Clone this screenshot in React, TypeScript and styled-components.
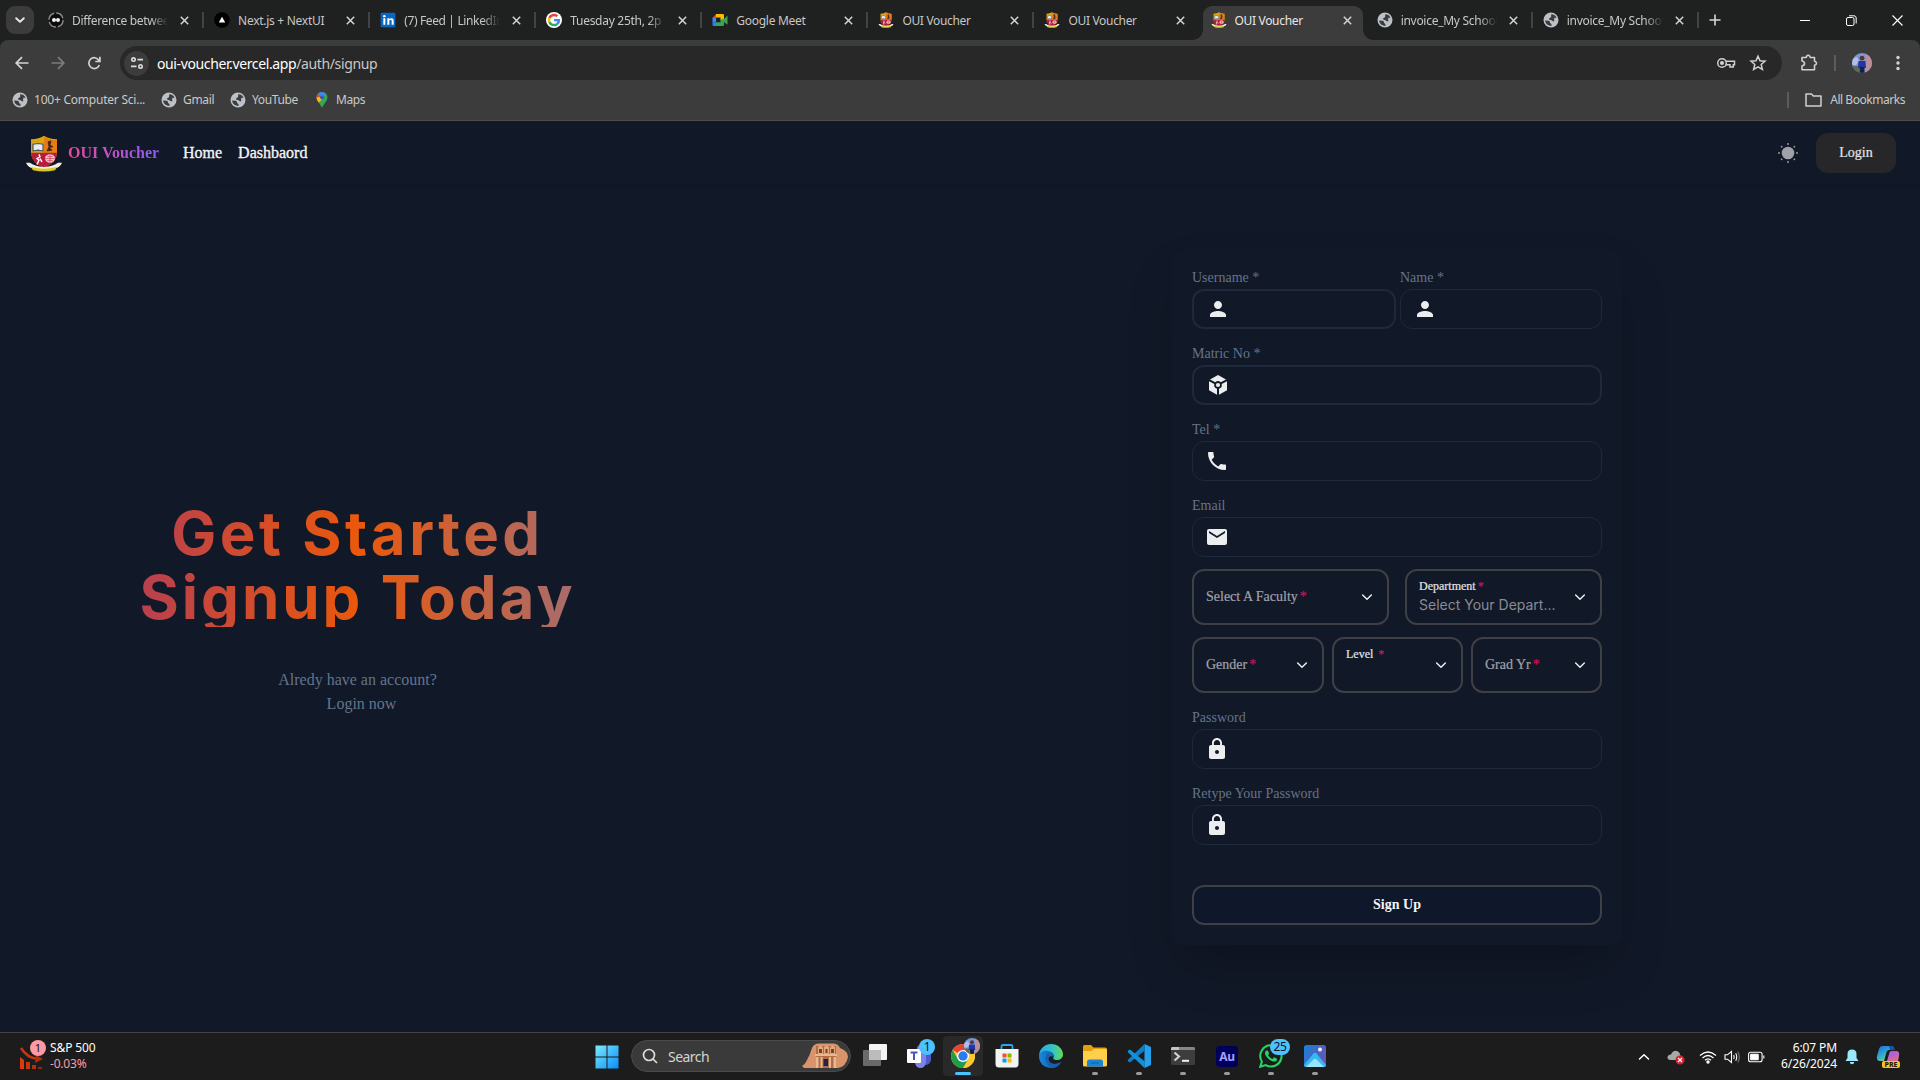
import React from 'react';
import styled, { createGlobalStyle } from 'styled-components';
import { MdPerson, MdPhone, MdEmail, MdLock } from 'react-icons/md';

const UI = `"Noto Sans", "Open Sans", sans-serif`;
const SERIF = `"Liberation Serif", "Times New Roman", serif`;

const Global = createGlobalStyle`
  * { box-sizing: border-box; }
  html, body { margin: 0; padding: 0; background: #111827; overflow: hidden; }
  svg { display: block; flex: none; }
  button { border: 0; padding: 0; margin: 0; background: none; color: inherit; font: inherit; }
`;

const Screen = styled.div`
  width: 1920px;
  height: 1080px;
  display: flex;
  flex-direction: column;
  overflow: hidden;
  font-family: ${UI};
  background: #111827;
`;

/* ---------- Browser ---------- */
const TabStrip = styled.div`
  height: 40px;
  display: flex;
  background: #1f2020;
  color: #c7c7c7;
  flex: none;
`;
const TabSearch = styled.button`
  width: 28px;
  height: 28px;
  margin: 6px 6px 0;
  border-radius: 9px;
  background: #3c3c3c;
  display: grid;
  place-items: center;
`;
const Tab = styled.div<{ $active?: boolean; $line?: boolean }>`
  position: relative;
  width: 160px;
  height: 34px;
  margin: 6px 6.08px 0 0;
  padding: 0 11px 6px 8px;
  display: flex;
  align-items: center;
  border-radius: 9px 9px 0 0;
  background: ${p => (p.$active ? '#3c3c3c' : 'transparent')};
  color: ${p => (p.$active ? '#e8e8e8' : '#c7c7c7')};
  &::after {
    content: '';
    position: absolute;
    display: ${p => (p.$line ? 'block' : 'none')};
    right: -4px;
    top: 6px;
    width: 2px;
    height: 16px;
    background: #424444;
  }
`;
const TabFoot = styled.i<{ $side: 'left' | 'right' }>`
  position: absolute;
  bottom: 0;
  ${p => p.$side}: -10px;
  width: 10px;
  height: 10px;
  background: radial-gradient(circle at ${p => (p.$side === 'left' ? '0 0' : '100% 0')}, transparent 9.5px, #3c3c3c 10px);
`;
const TabTitle = styled.span<{ $fade?: boolean; $ls: number }>`
  width: 98px;
  margin-left: 8px;
  padding-top: 1px;
  overflow: hidden;
  white-space: nowrap;
  font-size: 12px;
  line-height: 18px;
  letter-spacing: ${p => p.$ls}px;
  ${p => p.$fade && 'mask-image: linear-gradient(90deg, #000 80%, transparent 98%);'}
`;
const TabClose = styled.span`
  margin-left: auto;
`;
const NewTab = styled.button`
  width: 30px;
  margin-left: -1px;
  display: grid;
  place-items: center;
`;
const WindowControls = styled.div`
  margin-left: auto;
  width: 138px;
  display: grid;
  grid-template-columns: repeat(3, 46px);
  place-items: center;
`;
const ToolbarBack = styled.div`
  background: #1f2020;
  flex: none;
`;
const Toolbar = styled.div`
  height: 46px;
  display: flex;
  align-items: center;
  background: #3c3c3c;
  border-radius: 8px 8px 0 0;
`;
const NavButtons = styled.div`
  width: 120px;
  padding-left: 13px;
  display: flex;
  gap: 18px;
`;
const Omnibox = styled.div`
  width: 1662px;
  height: 34px;
  border-radius: 17px;
  background: #282828;
  display: flex;
  align-items: center;
  padding: 0 15px 0 4px;
`;
const SiteInfo = styled.span`
  width: 25px;
  height: 25px;
  border-radius: 50%;
  background: #3c3c3c;
  display: grid;
  place-items: center;
`;
const Url = styled.span`
  margin-left: 8px;
  font-size: 14px;
  letter-spacing: -0.38px;
  color: #ffffff;
  white-space: nowrap;
  & > em { font-style: normal; color: #c8c8c8; }
`;
const OmniActions = styled.div`
  margin-left: auto;
  display: flex;
  align-items: center;
  gap: 13px;
`;
const ToolActions = styled.div`
  flex: 1;
  display: flex;
  align-items: center;
  padding-left: 17px;
`;
const MenuDots = styled.svg`
  margin-left: 16px;
`;
const VLine = styled.i<{ $ml: number; $mr: number }>`
  width: 2px;
  height: 16px;
  margin: 0 ${p => p.$mr}px 0 ${p => p.$ml}px;
  background: #5c5c5c;
`;
const Bookmarks = styled.div`
  height: 35px;
  padding: 0 15px 7px 12px;
  display: flex;
  align-items: center;
  background: #3c3c3c;
  border-bottom: 1px solid #4d4d4d;
  font-size: 12px;
  color: #c9c9c9;
  flex: none;
`;
const Bookmark = styled.span<{ $w: number; $ls: number }>`
  width: ${p => p.$w}px;
  display: flex;
  align-items: center;
  gap: 6px;
  white-space: nowrap;
  letter-spacing: ${p => p.$ls}px;
`;
const AllBookmarks = styled.div`
  margin-left: auto;
  display: flex;
  align-items: center;
  white-space: nowrap;
  letter-spacing: -0.46px;
  & > span { margin-left: 8px; }
`;

/* ---------- Page ---------- */
const Page = styled.div`
  flex: 1;
  display: flex;
  flex-direction: column;
  font-family: ${SERIF};
  overflow: hidden;
`;
const Navbar = styled.header`
  height: 64px;
  flex: none;
  display: flex;
  align-items: center;
  padding: 0 24px 0 25px;
  background: #111827;
  box-shadow: 0 1px 3px rgba(0, 0, 0, 0.12);
`;
const Brand = styled.span`
  margin: 0 24px 0 5px;
  width: 91px;
  white-space: nowrap;
  font-size: 16px;
  font-weight: 600;
  background: linear-gradient(90deg, #ec4899, #8b5cf6);
  background-clip: text;
  -webkit-background-clip: text;
  color: transparent;
`;
const NavLink = styled.a`
  margin: 0 16px 0 0;
  font-size: 16px;
  color: #f3f4f6;
  -webkit-text-stroke: 0.35px #f3f4f6;
`;
const NavEnd = styled.div`
  margin-left: auto;
  display: flex;
  align-items: center;
  gap: 18px;
`;
const LoginButton = styled.button`
  width: 80px;
  height: 40px;
  border-radius: 12px;
  background: #27272a;
  color: #e4e4e7;
  font: 14px ${SERIF};
  -webkit-text-stroke: 0.2px #e4e4e7;
`;
const Main = styled.main`
  flex: 1;
  display: flex;
  align-items: flex-start;
`;
const Hero = styled.section`
  width: 715px;
  padding-top: 318px;
  display: flex;
  flex-direction: column;
  align-items: center;
`;
const Heading = styled.h1`
  margin: 0;
  width: 100%;
  height: 124px;
  text-align: center;
  font: 700 60px/64px Inter, sans-serif;
  background: linear-gradient(90deg, #98307a, #ea580c, #7c79ac);
  background-clip: text;
  -webkit-background-clip: text;
  color: transparent;
`;
const HeadingLine = styled.span<{ $ls: number }>`
  display: block;
  margin-top: -2px;
  margin-bottom: 2px;
  letter-spacing: ${p => p.$ls}px;
`;
const HeroNote = styled.p<{ $shift?: number }>`
  margin: 0;
  padding-left: ${p => p.$shift || 0}px;
  font-size: 16px;
  line-height: 25px;
  height: 24px;
  color: #64748b;
`;
const NoteGroup = styled.div`
  margin-top: 40px;
  display: flex;
  flex-direction: column;
  align-items: center;
`;
const Form = styled.form`
  width: 450px;
  height: 695px;
  margin: 65px 0 0 457px;
  padding: 15px 20px 20px;
  border-radius: 12px;
  background: #111827;
  box-shadow: 0 25px 50px -12px rgba(0, 0, 0, 0.25);
  display: flex;
  flex-direction: column;
`;
const Row = styled.div<{ $cols: string; $gap: number; $mb: number }>`
  display: grid;
  flex: none;
  grid-template-columns: ${p => p.$cols};
  gap: ${p => p.$gap}px;
  margin-bottom: ${p => p.$mb}px;
`;
const FieldBox = styled.label<{ $mb?: number }>`
  display: flex;
  flex: none;
  flex-direction: column;
  margin-bottom: ${p => p.$mb ?? 12}px;
`;
const FieldLabel = styled.span`
  height: 24px;
  font-size: 14px;
  line-height: 25px;
  color: #64748b;
`;
const Input = styled.span<{ $bold?: boolean }>`
  height: 40px;
  padding: 0 12px;
  display: flex;
  align-items: center;
  border: ${p => (p.$bold ? 2 : 1)}px solid #1e293b;
  border-radius: 12px;
  color: #ecedee;
`;
const SelectBox = styled.div`
  height: 56px;
  padding: 0 12px;
  display: flex;
  align-items: center;
  justify-content: space-between;
  border: 2px solid #3f3f46;
  border-radius: 12px;
`;
const SelectText = styled.div<{ $small?: boolean }>`
  display: flex;
  flex-direction: column;
  margin-top: ${p => (p.$small ? -1 : 0)}px;
`;
const SelectLabel = styled.span<{ $small?: boolean }>`
  font-size: ${p => (p.$small ? '12px' : '14px')};
  line-height: ${p => (p.$small ? '16px' : '20px')};
  color: ${p => (p.$small ? '#e4e4e7' : '#a1a1aa')};
  -webkit-text-stroke: 0.2px currentColor;
  white-space: pre;
  & > b { font-weight: 400; color: #d0135c; margin-left: 2px; }
`;
const SelectValue = styled.span`
  height: 21px;
  font: 14px/22px Inter, sans-serif;
  color: #8a8b94;
  white-space: nowrap;
`;
const Submit = styled.button`
  height: 40px;
  flex: none;
  margin-top: 28px;
  border: 2px solid #3f3f46;
  border-radius: 12px;
  background: #0f172a;
  color: #f4f4f5;
  font: 700 14px ${SERIF};
`;

/* ---------- Taskbar ---------- */
const Taskbar = styled.footer`
  height: 48px;
  flex: none;
  display: flex;
  align-items: center;
  background: #1c1c1c;
  border-top: 1px solid #454347;
  color: #ffffff;
  font-size: 12px;
`;
const Widget = styled.div`
  width: 595px;
  padding-left: 18px;
  display: flex;
  align-items: center;
`;
const TwoLines = styled.div<{ $end?: boolean }>`
  display: flex;
  flex-direction: column;
  align-items: ${p => (p.$end ? 'flex-end' : 'flex-start')};
  margin-top: -1px;
  line-height: 16px;
  letter-spacing: -0.12px;
  white-space: nowrap;
`;
const Loss = styled.span`
  color: #ff99a4;
  letter-spacing: -0.2px;
`;
const SearchPill = styled.div`
  width: 220px;
  height: 32px;
  margin-left: 12px;
  margin-top: -1px;
  padding: 0 2px 0 10px;
  border-radius: 16px;
  border: 1px solid #4a4a4a;
  background: #3a3a3a;
  display: flex;
  align-items: center;
  color: #d4d4d4;
  font-size: 14px;
  letter-spacing: -0.55px;
  & > span { margin: 0 auto 0 10px; }
`;
const Apps = styled.div`
  display: flex;
  margin-left: 2px;
  height: 100%;
`;
const AppSlot = styled.div<{ $active?: boolean }>`
  position: relative;
  width: 40px;
  height: 40px;
  margin: 3px 2px 0;
  border-radius: 4px;
  display: grid;
  place-items: center;
  background: ${p => (p.$active ? '#292929' : 'transparent')};
`;
const Indicator = styled.i<{ $active?: boolean }>`
  position: absolute;
  left: 50%;
  bottom: 1px;
  width: ${p => (p.$active ? 16 : 6)}px;
  height: 3px;
  border-radius: 2px;
  transform: translateX(-50%);
  background: ${p => (p.$active ? '#4cc2ff' : '#9a9a9a')};
`;
const Badge = styled.span<{ $w: number; $x: number }>`
  position: absolute;
  left: ${p => p.$x}px;
  top: 3px;
  width: ${p => p.$w}px;
  height: 16px;
  border-radius: 8px;
  background: #4cc2ff;
  color: #101418;
  font-size: 12px;
  line-height: 16px;
  letter-spacing: -0.3px;
  text-align: center;
`;
const BadgePic = styled.span`
  position: absolute;
  left: 21px;
  top: 2px;
`;
const Tray = styled.div`
  margin-left: auto;
  padding-right: 20px;
  display: flex;
  align-items: center;
`;
const Slot = styled.span<{ $w: number; $end?: boolean }>`
  width: ${p => p.$w}px;
  display: grid;
  place-items: center;
  ${p => p.$end && 'justify-items: end;'}
`;

/* ---------- Drawings ---------- */
const Crest = ({ w, h }: { w: number; h: number }) => (
  <svg width={w} height={h} viewBox="0 0 38 44" preserveAspectRatio="none">
    <path d="M6 5 Q14 5 19 1 Q24 5 32 5 V22 Q31 33 19 39 Q7 33 6 22Z" fill="#d9a514" />
    <path d="M19 2 Q24 6 32 6 V21 H19Z" fill="#e87c12" />
    <path d="M6 21 H32 Q32 33 19 39 Q6 33 6 21Z" fill="#b81c3c" />
    <path d="M8 11 L13 10 L18 11 V19 L13 18 L8 19Z" fill="#e8edf0" stroke="#4a5560" strokeWidth="1.2" />
    <path d="M23 8 L26 7 L25 12 L28 14 L24 15 L27 18 L22 19 L24 14Z" fill="#3c2416" stroke="#3c2416" strokeWidth=".8" />
    <circle cx="25" cy="28" r="5" fill="#f0c8cc" />
    <path d="M20 28h10M25 23v10M22 25q3 2 6 0M22 31q3-2 6 0" stroke="#c01c3c" strokeWidth=".6" fill="none" />
    <path d="M14 23l1 3-3 2 2 2-2 5M15 28l2 4" stroke="#fff" strokeWidth="1.5" fill="none" />
    <path d="M1 33 Q3 39 9 40 Q19 43 29 40 Q35 39 37 33 L33 33 Q29 37 19 38 Q9 37 5 33Z" fill="#f2efe0" />
    <path d="M6 38 Q19 42 32 38 L30 42 Q19 45 8 42Z" fill="#d6c922" />
  </svg>
);
const Globe = ({ s = 16 }: { s?: number }) => (
  <svg width={s} height={s} viewBox="0 0 16 16">
    <circle cx="8" cy="8" r="7.5" fill="#bdc1c6" />
    <path d="M2 8.5 L5.5 8.8 Q7.5 9.2 7 11 L8.5 12 V14 Q3 13.5 2 8.5ZM8.2 2.2 Q12.5 2.2 13.6 6.2 L11.8 5.6 Q10.4 7.6 11.4 9 L10.2 9.6 Q8.8 8 6.4 7.8 Q5.2 6.4 7.2 5.8 Q8.6 5 8.2 2.2Z" fill="#3a3d40" />
  </svg>
);
const GoogleG = () => (
  <svg width="16" height="16" viewBox="0 0 48 48">
    <circle cx="24" cy="24" r="24" fill="#fff" />
    <g transform="translate(5 5) scale(.79)">
      <path fill="#EA4335" d="M24 9.5c3.54 0 6.71 1.22 9.21 3.6l6.85-6.85C35.9 2.38 30.47 0 24 0 14.62 0 6.51 5.38 2.56 13.22l7.98 6.19C12.43 13.72 17.74 9.5 24 9.5z" />
      <path fill="#4285F4" d="M46.98 24.55c0-1.57-.15-3.09-.38-4.55H24v9.02h12.94c-.58 2.96-2.26 5.48-4.78 7.18l7.73 6c4.51-4.18 7.09-10.36 7.09-17.65z" />
      <path fill="#FBBC05" d="M10.53 28.59c-.48-1.45-.76-2.99-.76-4.59s.27-3.14.76-4.59l-7.98-6.19C.92 16.46 0 20.12 0 24c0 3.88.92 7.54 2.56 10.78l7.97-6.19z" />
      <path fill="#34A853" d="M24 48c6.48 0 11.93-2.13 15.89-5.81l-7.73-6c-2.15 1.45-4.92 2.3-8.16 2.3-6.26 0-11.57-4.22-13.47-9.91l-7.98 6.19C6.51 42.62 14.62 48 24 48z" />
    </g>
  </svg>
);
const favicons: Record<string, React.ReactNode> = {
  diff: (
    <svg width="16" height="16" viewBox="0 0 16 16">
      <circle cx="8" cy="8" r="7" fill="#0c0c0c" stroke="#8c8c8c" strokeWidth="1.4" strokeDasharray="9 2" />
      <circle cx="6" cy="8" r="2" fill="#f4f4f4" />
      <circle cx="10" cy="8" r="2" fill="#f4f4f4" />
    </svg>
  ),
  next: (
    <svg width="16" height="16" viewBox="0 0 16 16">
      <circle cx="8" cy="8" r="7.8" fill="#000" />
      <path d="M8 4.8 L11.2 10.4 H4.8Z" fill="#fff" />
    </svg>
  ),
  linkedin: (
    <svg width="16" height="16" viewBox="0 0 24 24">
      <rect x="1" y="1" width="22" height="22" rx="2" fill="#0a66c2" />
      <path d="M5 9.5h3v9.5H5zM11 9.5h2.9v1.3c.6-1 1.7-1.6 3-1.6 2.8 0 3.6 1.8 3.6 4.4V19h-3v-4.8c0-1.3-.2-2.4-1.6-2.4S14 12.900 14 14.200V19h-3z" fill="#fff" />
      <circle cx="6.500" cy="6.200" r="1.800" fill="#fff" />
    </svg>
  ),
  google: <GoogleG />,
  meet: (
    <svg width="16" height="16" viewBox="0 0 16 16">
      <path d="M4 2 V6 H0.5Z" fill="#ea4335" />
      <path d="M4 2 H10.500 Q12 2 12 3.300 V7 L8.500 8.500 V5.500 H4Z" fill="#fbbc04" />
      <path d="M.5 5.500 H4 V10.500 H.5Z" fill="#4285f4" />
      <path d="M.5 10.500 H8.500 V14 H1.800 Q.5 14 .5 12.700Z" fill="#2684fc" />
      <path d="M8.500 10.500 V8 L12 7 L15.500 3.500 V12.800 L12 10 V12.700 Q12 14 10.700 14 H4 V10.500Z" fill="#34a853" />
    </svg>
  ),
  crest: <Crest w={16} h={16} />,
  globe: <Globe />,
};
const Chevron = ({ s = 14, c = '#fff', up = false, w = 1.6 }: { s?: number; c?: string; up?: boolean; w?: number }) => (
  <svg width={s} height={s} viewBox="0 0 14 14" fill="none" stroke={c} strokeWidth={w} strokeLinecap="round" strokeLinejoin="round">
    <path d={up ? 'M2.500 9 L7 4.800 L11.500 9' : 'M3.2 5.200 L7 8.9 L10.8 5.200'} />
  </svg>
);
const Cross = () => (
  <svg width="9" height="9" viewBox="0 0 9 9" stroke="#d4d4d4" strokeWidth="1.500">
    <path d="M.8 .8 L8.200 8.200 M8.200 .8 L.8 8.200" />
  </svg>
);
const Portrait = ({ s }: { s: number }) => (
  <svg width={s} height={s} viewBox="0 0 20 20">
    <defs>
      <clipPath id={`face${s}`}><circle cx="10" cy="10" r="10" /></clipPath>
    </defs>
    <g clipPath={`url(#face${s})`}>
      <rect width="20" height="20" fill="#7c94dc" />
      <path d="M0 6 L5 4 L7 8 L4 12 L0 12Z" fill="#b0c0ea" />
      <path d="M14 0 H20 V20 H13Z" fill="#b98f9c" />
      <path d="M0 13 H7 V20 H0Z" fill="#5c6a5c" />
      <path d="M6.500 8 H13.500 L14 15 H6Z" fill="#2336a0" />
      <path d="M7.500 14 H12.500 V20 H7.500Z" fill="#1a2040" />
      <circle cx="10" cy="5.200" r="2.400" fill="#5a3626" />
    </g>
  </svg>
);
const Cube = () => (
  <svg width="24" height="24" viewBox="0 0 24 24">
    <path fill="currentColor" d="M12 2 L20 6.500 L14.700 9.300 A4 4 0 0 0 9.300 9.300 L4 6.500Z" />
    <path fill="currentColor" d="M3 8.200 L8.300 11 A4 4 0 0 0 11 15.700 V21.700 L3 17.200Z" />
    <path fill="currentColor" d="M21 8.200 L15.700 11 A4 4 0 0 1 13 15.700 V21.700 L21 17.200Z" />
    <circle cx="12" cy="12" r="2.100" fill="currentColor" />
  </svg>
);

const tabs = [
  { icon: 'diff', title: 'Difference between', fade: true, ls: -0.33 },
  { icon: 'next', title: 'Next.js + NextUI', ls: -0.28 },
  { icon: 'linkedin', title: '(7) Feed | LinkedIn', fade: true, ls: -0.36 },
  { icon: 'google', title: 'Tuesday 25th, 2p |', fade: true, ls: -0.28 },
  { icon: 'meet', title: 'Google Meet', ls: -0.28 },
  { icon: 'crest', title: 'OUI Voucher', ls: -0.33 },
  { icon: 'crest', title: 'OUI Voucher', ls: -0.33 },
  { icon: 'crest', title: 'OUI Voucher', ls: -0.33, active: true },
  { icon: 'globe', title: 'invoice_My School', fade: true, ls: -0.28 },
  { icon: 'globe', title: 'invoice_My School', fade: true, ls: -0.28 },
];

const Field = ({ label, bold, mb, children }: { label: string; bold?: boolean; mb?: number; children: React.ReactNode }) => (
  <FieldBox $mb={mb}>
    <FieldLabel>{label}</FieldLabel>
    <Input $bold={bold}>{children}</Input>
  </FieldBox>
);

const Select = ({ label, small, value }: { label: string; small?: boolean; value?: string }) => (
  <SelectBox>
    <SelectText $small={small}>
      <SelectLabel $small={small}>{label}<b>*</b></SelectLabel>
      {small && <SelectValue>{value}</SelectValue>}
    </SelectText>
    <Chevron s={16} c="#ecedee" w={1.300} />
  </SelectBox>
);

const appIcons: { icon: React.ReactNode; active?: boolean; open?: boolean; badge?: string }[] = [
  {
    icon: (
      <svg width="26" height="24" viewBox="0 0 26 24">
        <rect x="7" y="0" width="18" height="16" rx="1" fill="#f4f4f4" />
        <rect x="1" y="6" width="18" height="16" rx="1" fill="#6a6a6a" />
        <rect x="7" y="6" width="12" height="10" fill="#bcbcbc" />
      </svg>
    ),
  },
  {
    badge: '1',
    icon: (
      <svg width="26" height="26" viewBox="0 0 26 26">
        <circle cx="15" cy="6" r="4" fill="#7b83eb" />
        <path d="M16 9 H25 V17 Q24 22 19 22 H16Z" fill="#5059c9" />
        <path d="M10 9 H20 V19 Q19 25 14.500 25 Q10 25 9 20Z" fill="#7b83eb" />
        <rect x="1" y="6" width="14" height="14" rx="1" fill="#fff" />
        <path d="M4.500 9.500 H11.500 M8 9.500 V17" stroke="#4b53bc" strokeWidth="2" />
      </svg>
    ),
  },
  {
    active: true,
    open: true,
    icon: (
      <svg width="24" height="24" viewBox="0 0 24 24">
        <circle cx="12" cy="12" r="12" fill="#fcc934" />
        <path d="M12 12 L1.610 6 A12 12 0 0 1 22.390 6 Z" fill="#ea4335" />
        <path d="M12 6 H22.390 A12 12 0 0 1 12 24 L17.200 15Z" fill="#fcc934" />
        <path d="M1.610 6 L6.800 15 L12 18 L17.200 15 L12 24 A12 12 0 0 1 1.610 6Z" fill="#1e9e4a" />
        <circle cx="12" cy="12" r="6" fill="#fff" />
        <circle cx="12" cy="12" r="4.700" fill="#2b7cf0" />
      </svg>
    ),
  },
  {
    icon: (
      <svg width="24" height="24" viewBox="0 0 24 24">
        <path d="M6.500 6 V2.500 Q6.500 1 8 1 H16 Q17.500 1 17.500 2.500 V6" fill="none" stroke="#28a8ea" strokeWidth="1.800" />
        <path d="M.5 5 H23.500 V20 Q23.500 23.500 20 23.500 H4 Q.5 23.500 .5 20Z" fill="#f3f3f3" />
        <path d="M7.500 9.500h4v4h-4z" fill="#f25022" /><path d="M12.500 9.500h4v4h-4z" fill="#7fba00" />
        <path d="M7.500 14.500h4v4h-4z" fill="#00a4ef" /><path d="M12.500 14.500h4v4h-4z" fill="#ffb900" />
      </svg>
    ),
  },
  {
    icon: (
      <svg width="24" height="24" viewBox="0 0 24 24">
        <defs>
          <linearGradient id="edgeTop" x1="0" x2="1"><stop offset="0" stopColor="#2aa8e8" /><stop offset=".6" stopColor="#35c4c0" /><stop offset="1" stopColor="#62dc50" /></linearGradient>
          <linearGradient id="edgeLow" x1="0" x2="1"><stop offset="0" stopColor="#1b88dc" /><stop offset="1" stopColor="#0d4f9c" /></linearGradient>
        </defs>
        <path d="M0 11 C1 4 6 0 12 0 C19 0 24 5 24 10.500 C24 14 21 16 18 16 C15 16 13.500 15 14.500 13.500 C16 11 13 8 9.500 8 C5 8 1 9 0 11Z" fill="url(#edgeTop)" />
        <path d="M0 12 C0 8 5 6 9 7 C13 7.500 15 10 14.500 13 C11 10.500 8 14 10 17 C12 21 18 20.500 22 18 C20 22 16 24 12 24 C5 24 0 19 0 12Z" fill="url(#edgeLow)" />
        <path d="M9 9 C5 12 6 20 13 23.900 C17 23.800 20.500 21.500 22 18 C18 20.500 12 21 10 17 C8.500 14 10 12 11 11.500Z" fill="#1460b4" />
      </svg>
    ),
  },
  {
    open: true,
    icon: (
      <svg width="24" height="24" viewBox="0 0 24 24">
        <path d="M0 2.500 Q0 1 1.500 1 H8 L10.500 3.500 H22 Q24 3.500 24 5 V10 H0Z" fill="#e0a010" />
        <path d="M0 7 H8.500 L11 5 H22.500 Q24 5 24 6.500 V21 Q24 22.500 22.500 22.500 H1.500 Q0 22.500 0 21Z" fill="#ffcf48" />
        <path d="M4 22.500 V18 Q4 15.500 6.500 15.500 H17.500 Q20 15.500 20 18 V22.500Z" fill="#1883d7" />
        <path d="M8 18.500 H16 V19.500 H8Z" fill="#0c5ea8" />
      </svg>
    ),
  },
  {
    open: true,
    icon: (
      <svg width="24" height="24" viewBox="0 0 24 24">
        <path d="M17.500 0 L24 3 V21 L17.500 24Z" fill="#26a0ee" />
        <path d="M17.500 0 L17.800 6.500 L3 18.500 L1.200 17.500 Q.1 16.500 1.200 15.500Z" fill="#0f7cc4" />
        <path d="M17.500 24 L17.800 17.500 L3 5.500 L1.200 6.500 Q.1 7.500 1.200 8.500Z" fill="#1390da" />
      </svg>
    ),
  },
  {
    open: true,
    icon: (
      <svg width="24" height="20" viewBox="0 0 24 20">
        <rect y="1" width="24" height="18" rx="1.500" fill="#3d3d3d" />
        <path d="M0 4 V2.500 Q0 1 1.500 1 H22.500 Q24 1 24 2.500 V4Z" fill="#858585" />
        <path d="M0 4 V2.500 Q0 1 1.500 1 H8 V4Z" fill="#c4c4c4" />
        <path d="M3.500 6.500 L8 10.500 L3.500 14.500" fill="none" stroke="#d0d0d0" strokeWidth="2.200" />
        <path d="M11 14.800 H18" stroke="#f0f0f0" strokeWidth="2" />
      </svg>
    ),
  },
  { open: true, icon: null },
  {
    open: true,
    badge: '25',
    icon: (
      <svg width="24" height="24" viewBox="0 0 24 24" fill="#25d366">
        <path d="M17.472 14.382c-.297-.149-1.758-.867-2.030-.967-.273-.099-.471-.148-.670.150-.197.297-.767.966-.940 1.164-.173.199-.347.223-.644.075-.297-.150-1.255-.463-2.390-1.475-.883-.788-1.480-1.761-1.653-2.059-.173-.297-.018-.458.130-.606.134-.133.298-.347.446-.520.149-.174.198-.298.298-.497.099-.198.050-.371-.025-.520-.075-.149-.669-1.612-.916-2.207-.242-.579-.487-.500-.669-.510-.173-.008-.371-.010-.570-.010-.198 0-.520.074-.792.372-.272.297-1.040 1.016-1.040 2.479 0 1.462 1.065 2.875 1.213 3.074.149.198 2.096 3.200 5.077 4.487.709.306 1.262.489 1.694.625.712.227 1.360.195 1.871.118.571-.085 1.758-.719 2.006-1.413.248-.694.248-1.289.173-1.413-.074-.124-.272-.198-.570-.347" />
        <path d="M12 1.300 A10.600 10.600 0 1 1 6.700 21.100 L1.300 22.700 L2.900 17.500 A10.600 10.600 0 0 1 12 1.300Z" fill="none" stroke="#25d366" strokeWidth="2.100" />
      </svg>
    ),
  },
  {
    open: true,
    icon: (
      <svg width="22" height="22" viewBox="0 0 22 22">
        <defs>
          <linearGradient id="pic" x1="0" x2="1" y2=".6"><stop offset="0" stopColor="#1583d8" /><stop offset="1" stopColor="#6854b4" /></linearGradient>
        </defs>
        <rect width="22" height="22" rx="2.500" fill="url(#pic)" />
        <path d="M0 20 L9.500 8.500 Q11 7 12.500 8.500 L22 20 Q22 22 20 22 H2 Q0 22 0 20Z" fill="#36b8f4" />
        <path d="M2 22 L9.500 14.500 Q11 13 12.500 14.500 L20 22Z" fill="#98e4fc" />
        <circle cx="16" cy="4.500" r="2" fill="#f4f0fc" />
      </svg>
    ),
  },
];
const AuTile = styled.span`
  width: 22px;
  height: 21px;
  border-radius: 4px;
  background: #00005b;
  color: #a3a0ff;
  font: 700 12px/21px ${UI};
  letter-spacing: -0.4px;
  text-align: center;
`;
const WidgetIcon = styled.div`
  position: relative;
  width: 32px;
  height: 30px;
  margin-top: -2px;
`;
const WidgetBadge = styled.span`
  position: absolute;
  left: 12px;
  top: -1px;
  width: 16px;
  height: 16px;
  border-radius: 50%;
  background: #ff99a4;
  color: #111;
  font-size: 11px;
  line-height: 16px;
  text-align: center;
`;
const Pre = styled.span`
  position: absolute;
  left: 6px;
  top: 17px;
  width: 18px;
  height: 7px;
  border-radius: 2px;
  background: #fcc419;
  color: #1c1c1c;
  font: 800 7px/7px ${UI};
  text-align: center;
`;
const Copilot = styled.div`
  position: relative;
  width: 24px;
  height: 24px;
  margin-top: -1px;
`;

export default function App() {
  return (
    <Screen>
      <Global />
      <TabStrip>
        <TabSearch><Chevron s={14} c="#e6e6e6" w={2} /></TabSearch>
        {tabs.map((t, i) => (
          <Tab key={i} $active={t.active} $line={i !== 6 && i !== 7}>
            {t.active && <TabFoot $side="left" />}
            {t.active && <TabFoot $side="right" />}
            {favicons[t.icon]}
            <TabTitle $fade={t.fade} $ls={t.ls}>{t.title}</TabTitle>
            <TabClose><Cross /></TabClose>
          </Tab>
        ))}
        <NewTab>
          <svg width="12" height="12" viewBox="0 0 12 12" stroke="#d6d6d6" strokeWidth="1.600"><path d="M6 .5V11.500M.5 6H11.500" /></svg>
        </NewTab>
        <WindowControls>
          <svg width="10" height="10" viewBox="0 0 10 10" stroke="#fff"><path d="M0 5.500H10" /></svg>
          <svg width="11" height="11" viewBox="0 0 11 11" stroke="#fff" fill="none"><rect x=".5" y="2.500" width="7.500" height="8" rx="1.500" /><path d="M3 .8H8Q10.200.8 10.200 3V8.500" /></svg>
          <svg width="11" height="11" viewBox="0 0 11 11" stroke="#fff" strokeWidth="1.100"><path d="M.5.5L10.500 10.500M10.500.5L.5 10.500" /></svg>
        </WindowControls>
      </TabStrip>

      <ToolbarBack>
        <Toolbar>
          <NavButtons>
            <svg width="18" height="18" viewBox="0 0 18 18" fill="none" stroke="#d4d4d4" strokeWidth="1.700"><path d="M15.500 9H3.500M9 3.200L3.200 9L9 14.800" /></svg>
            <svg width="18" height="18" viewBox="0 0 18 18" fill="none" stroke="#7c7c7c" strokeWidth="1.700"><path d="M2.500 9H14.500M9 3.200L14.800 9L9 14.800" /></svg>
            <svg width="18" height="18" viewBox="0 0 18 18" fill="none" stroke="#d4d4d4" strokeWidth="1.700"><path d="M14.300 11A5.400 5.400 0 1 1 13.800 6.200L14.800 7.500M14.900 2.800V7.500H10.300" /></svg>
          </NavButtons>
          <Omnibox>
            <SiteInfo>
              <svg width="14" height="14" viewBox="0 0 14 14" fill="none" stroke="#dcdcdc" strokeWidth="1.600"><circle cx="3.500" cy="3.600" r="1.700" /><path d="M7.500 3.600H13M1 10.400H6.500" /><circle cx="10.500" cy="10.400" r="1.700" /></svg>
            </SiteInfo>
            <Url>oui-voucher.vercel.app<em>/auth/signup</em></Url>
            <OmniActions>
              <svg width="20" height="20" viewBox="0 0 20 20" fill="none" stroke="#d0d0d0" strokeWidth="1.500"><circle cx="6" cy="10" r="4.300" /><circle cx="6" cy="10" r="1.300" fill="#d0d0d0" /><path d="M10 8.200H18.500V11.800H17.300V14H14V11.800H10" /></svg>
              <svg width="18" height="18" viewBox="0 0 18 18" fill="none" stroke="#d0d0d0" strokeWidth="1.500"><path d="M9 2.200L11 6.800L16 7.200L12.200 10.500L13.400 15.400L9 12.800L4.600 15.400L5.800 10.500L2 7.200L7 6.800Z" /></svg>
            </OmniActions>
          </Omnibox>
          <ToolActions>
            <svg width="20" height="20" viewBox="0 0 20 20" fill="none" stroke="#d0d0d0" strokeWidth="1.600" strokeLinejoin="round"><path d="M3 4.500H7.200Q7.500 2.300 9.200 2.300T11.200 4.500H15.500V8.200Q17.500 8.600 17.500 10.200T15.500 12.200V16.700H3V13Q5.500 12.500 5.500 10.500T3 8Z" /></svg>
            <VLine $ml={15} $mr={16} />
            <Portrait s={20} />
            <MenuDots width="20" height="20" viewBox="0 0 20 20" fill="#d4d4d4"><circle cx="10" cy="4.500" r="1.700" /><circle cx="10" cy="10" r="1.700" /><circle cx="10" cy="15.500" r="1.700" /></MenuDots>
          </ToolActions>
        </Toolbar>
      </ToolbarBack>
      <Bookmarks>
        <Bookmark $w={149} $ls={-0.23}><Globe />100+ Computer Sci...</Bookmark>
        <Bookmark $w={69} $ls={-0.3}><Globe />Gmail</Bookmark>
        <Bookmark $w={84} $ls={-0.36}><Globe />YouTube</Bookmark>
        <Bookmark $w={80} $ls={-0.4}>
          <svg width="16" height="16" viewBox="0 0 16 16">
            <path d="M8 0A5.500 5.500 0 0 1 13.500 5.500Q13.500 8 11 11Q9 13.500 8 16Q7 13.500 5 11Q2.500 8 2.500 5.500A5.500 5.500 0 0 1 8 0Z" fill="#34a853" />
            <path d="M8 0Q5.500 0 3.800 2L8 5.500L11.800 1.500Q10.300 0 8 0Z" fill="#4285f4" />
            <path d="M3.800 2Q2.500 3.500 2.500 5.500L6 7L8 5.500Z" fill="#ea4335" />
            <path d="M2.500 5.500Q2.500 8 4.800 10.500L9.500 6L6 5Z" fill="#fbbc04" />
            <circle cx="8" cy="5.500" r="1.900" fill="#2a5ccc" />
          </svg>
          Maps
        </Bookmark>
        <AllBookmarks>
          <VLine $ml={0} $mr={16} />
          <svg width="17" height="16" viewBox="0 0 17 16" fill="none" stroke="#cfcfcf" strokeWidth="1.500" strokeLinejoin="round"><path d="M1 2H6.500L8.300 4H16V14H1Z" /></svg>
          <span>All Bookmarks</span>
        </AllBookmarks>
      </Bookmarks>

      <Page>
        <Navbar>
          <Crest w={38} h={37} />
          <Brand>OUI Voucher</Brand>
          <NavLink>Home</NavLink>
          <NavLink>Dashbaord</NavLink>
          <NavEnd>
            <svg width="20" height="20" viewBox="0 0 20 20" fill="#a1a1aa">
              <circle cx="10" cy="10" r="6.300" />
              {[0, 45, 90, 135, 180, 225, 270, 315].map(a => (
                <circle key={a} cx={10 + 9 * Math.cos((a * Math.PI) / 180)} cy={10 + 9 * Math.sin((a * Math.PI) / 180)} r=".9" />
              ))}
            </svg>
            <LoginButton>Login</LoginButton>
          </NavEnd>
        </Navbar>
        <Main>
          <Hero>
            <Heading>
              <HeadingLine $ls={3.5}>Get Started</HeadingLine>
              <HeadingLine $ls={3}>Signup Today</HeadingLine>
            </Heading>
            <NoteGroup>
              <HeroNote>Alredy have an account?</HeroNote>
              <HeroNote $shift={8}>Login now</HeroNote>
            </NoteGroup>
          </Hero>
          <Form>
            <Row $cols="204px 202px" $gap={4} $mb={12}>
              <Field label="Username *" bold mb={0}><MdPerson size={24} /></Field>
              <Field label="Name *" mb={0}><MdPerson size={24} /></Field>
            </Row>
            <Field label="Matric No *" bold><Cube /></Field>
            <Field label="Tel *"><MdPhone size={24} /></Field>
            <Field label="Email"><MdEmail size={24} /></Field>
            <Row $cols="1fr 1fr" $gap={16} $mb={12}>
              <Select label="Select A Faculty" />
              <Select label="Department" small value="Select Your Depart..." />
            </Row>
            <Row $cols="132px 131px 131px" $gap={8} $mb={12}>
              <Select label="Gender" />
              <Select label="Level " small />
              <Select label="Grad Yr" />
            </Row>
            <Field label="Password"><MdLock size={24} /></Field>
            <Field label="Retype Your Password"><MdLock size={24} /></Field>
            <Submit type="button">Sign Up</Submit>
          </Form>
        </Main>
      </Page>

      <Taskbar>
        <Widget>
          <WidgetIcon>
            <svg width="26" height="30" viewBox="0 0 26 30">
              <path d="M3 7Q9 17 20 18" fill="none" stroke="#c8360c" strokeWidth="2.500" />
              <path d="M18 14L25 18L17 22Z" fill="#b02c0c" />
              <path d="M2 16L6 19V28H2Z" fill="#dc3c0c" /><path d="M8 21h4v7H8z" fill="#c8360c" />
              <path d="M14 24h4v4h-4z" fill="#b4300c" /><path d="M20 26h4v2h-4z" fill="#98280c" />
            </svg>
            <WidgetBadge>1</WidgetBadge>
          </WidgetIcon>
          <TwoLines><span>S&amp;P 500</span><Loss>-0.03%</Loss></TwoLines>
        </Widget>
        <svg width="24" height="24" viewBox="0 0 24 24">
          <defs><linearGradient id="win" x2="1" y2="1"><stop offset="0" stopColor="#7ceafc" /><stop offset="1" stopColor="#0a8cf8" /></linearGradient></defs>
          <path d="M.5.5H11.500V11.500H.5ZM12.500.5H23.500V11.500H12.500ZM.5 12.500H11.500V23.500H.5ZM12.500 12.500H23.500V23.500H12.500Z" fill="url(#win)" />
        </svg>
        <SearchPill>
          <svg width="16" height="16" viewBox="0 0 16 16" fill="none" stroke="#dcdcdc" strokeWidth="1.700"><circle cx="7" cy="7" r="5.500" /><path d="M11 11L15 15" /></svg>
          <span>Search</span>
          <svg width="46" height="26" viewBox="0 0 46 26">
            <path d="M0 23Q3 21 4 19Q8 12 10 5Q12 0 18 .5H30Q36 0 38 5Q46 8 46 14Q44 24 36 25H2Z" fill="#d8946a" />
            <path d="M14 3H34V25H14Z" fill="#b06c44" />
            <path d="M16 4L19 2L21 5V11H16ZM22 4L24.500 2L27 4V11H22ZM28 5L30 2L33 4V11H28Z" fill="#e0a87c" />
            <path d="M13 11H35V13H13ZM14 14H16.500V25H14ZM18.500 14H20.500V25H18.500ZM27 14H29V25H27ZM31.500 14H34V25H31.500Z" fill="#e8b890" />
            <path d="M21.500 16H26V23H21.500Z" fill="#282048" />
            <path d="M17 6H20V10H17ZM29 6H32V10H29ZM23.500 6H25.500V10H23.500Z" fill="#784028" />
          </svg>
        </SearchPill>
        <Apps>
          {appIcons.map((a, i) => (
            <AppSlot key={i} $active={a.active}>
              {a.icon ?? <AuTile>Au</AuTile>}
              {a.open && <Indicator $active={a.active} />}
              {a.badge && <Badge $w={a.badge === '1' ? 16 : 20} $x={a.badge === '1' ? 20 : 19}>{a.badge}</Badge>}
              {a.active && <BadgePic><Portrait s={16} /></BadgePic>}
            </AppSlot>
          ))}
        </Apps>
        <Tray>
          <Slot $w={30}><Chevron s={14} up w={1.500} /></Slot>
          <Slot $w={34}>
            <svg width="18" height="16" viewBox="0 0 18 16">
              <path d="M4 11Q0 11 .5 8Q1 5.500 4 5.500Q6 1 10 2Q13 3 13 6Q15 7 14 11Z" fill="#a8a8a8" />
              <circle cx="13" cy="11" r="4.600" fill="#d8202c" />
              <path d="M11 9L15 13M15 9L11 13" stroke="#fff" strokeWidth="1.200" />
            </svg>
          </Slot>
          <Slot $w={30}>
            <svg width="18" height="14" viewBox="0 0 18 14" fill="none" stroke="#fff" strokeWidth="1.300"><path d="M1 5.500Q9-1.500 17 5.500M3.500 8Q9 3 14.500 8M6 10.300Q9 7.500 12 10.300" /><circle cx="9" cy="12" r="1.100" fill="#fff" /></svg>
          </Slot>
          <Slot $w={18}>
            <svg width="17" height="14" viewBox="0 0 17 14" fill="none" stroke="#fff" strokeWidth="1.100"><path d="M1 4.800H3.500L7.500 1.500V12.500L3.500 9.200H1Z" /><path d="M9.700 5Q10.700 7 9.700 9M11.700 3.200Q13.800 7 11.700 10.800" /><path d="M13.700 1.500Q17 7 13.700 12.500" stroke="#777" /></svg>
          </Slot>
          <Slot $w={30}>
            <svg width="17" height="12" viewBox="0 0 17 12" fill="none" stroke="#fff" strokeWidth="1.100"><rect x=".6" y="1.300" width="13.500" height="9.400" rx="2" /><rect x="2.700" y="3.300" width="7.500" height="5.400" rx=".5" fill="#fff" /><path d="M15.800 4.500V7.500" /></svg>
          </Slot>
          <Slot $w={66} $end><TwoLines $end><span>6:07 PM</span><span>6/26/2024</span></TwoLines></Slot>
          <Slot $w={30}>
            <svg width="14" height="16" viewBox="0 0 14 16" fill="#9ae8fc"><path d="M7 .5Q11.500.5 11.500 5V9L13.500 12H.5L2.500 9V5Q2.500.5 7 .5ZM4.800 13H9.200Q9 15.300 7 15.300T4.800 13Z" /></svg>
          </Slot>
          <Slot $w={9} />
          <Copilot>
            <svg width="24" height="24" viewBox="0 0 24 24">
              <defs>
                <linearGradient id="coA" x1=".3" y2="1"><stop offset="0" stopColor="#2478e0" /><stop offset=".5" stopColor="#38b8c0" /><stop offset="1" stopColor="#e8dc30" /></linearGradient>
                <linearGradient id="coB" x1=".5" y2="1"><stop offset="0" stopColor="#a060f0" /><stop offset="1" stopColor="#f06c70" /></linearGradient>
              </defs>
              <path d="M6 2H15Q18 2 18.500 6H13Q11 6 10 10L8 17H4Q0 17 1 12L3 5Q4 2 6 2Z" fill="url(#coA)" />
              <path d="M15 7H20Q24 7 23 12L22 17H11L13 10Q13.500 7 15 7Z" fill="url(#coB)" />
              <path d="M13 2H15Q18 2 18.500 6H14Z" fill="#1850b8" />
            </svg>
            <Pre>PRE</Pre>
          </Copilot>
        </Tray>
      </Taskbar>
    </Screen>
  );
}
